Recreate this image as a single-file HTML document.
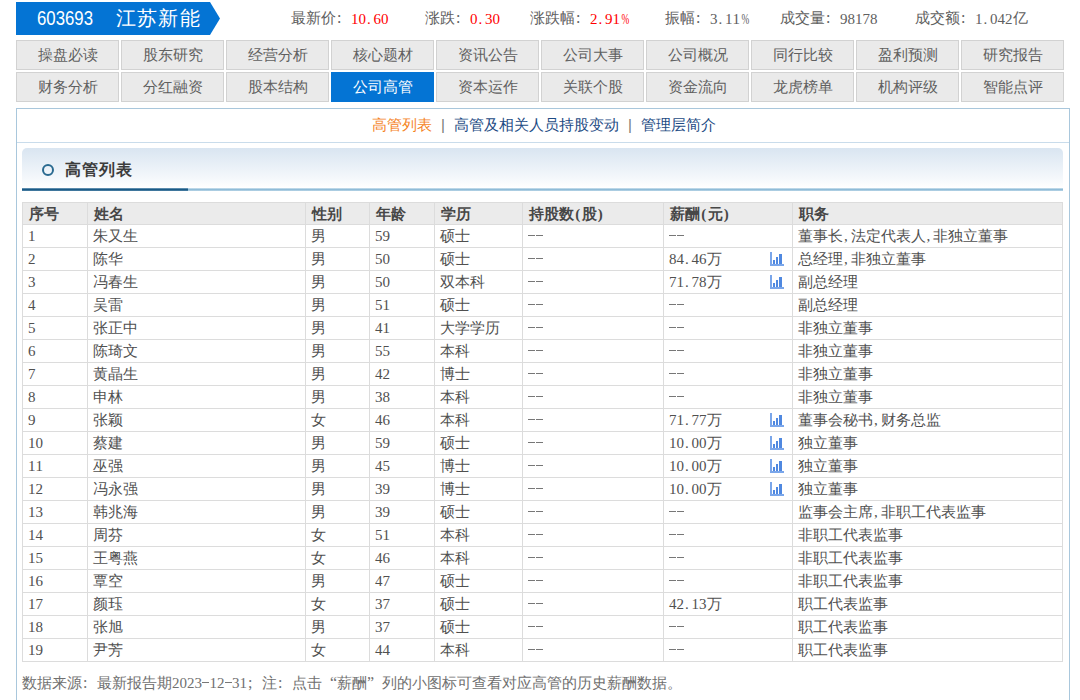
<!DOCTYPE html>
<html><head><meta charset="utf-8"><style>
*{margin:0;padding:0;box-sizing:border-box}
html,body{width:1080px;height:700px;overflow:hidden;background:#fff}
body{position:relative;font-family:"Liberation Sans",sans-serif;font-size:15px;color:#333}
.abs{position:absolute;white-space:nowrap}
i{font-style:normal}
.h{display:inline-block;width:7.5px;text-align:center;font-family:"Liberation Serif",serif;font-size:15px}
.fq{display:inline-block;width:15px;text-align:left;font-family:"Liberation Serif",serif;font-size:16px}
.fq.r{text-align:right}
.h.pc{transform:scaleX(.62)}
.h.p{text-align:left;text-indent:1px}
.q .h{position:relative;top:1px}
.d{display:inline-block;width:7.5px;height:1px;vertical-align:middle;position:relative;top:-2px;background:linear-gradient(90deg,#777 7px,transparent 7px)}
.fc{display:inline-block;width:15px;text-align:left;padding-left:1px;font-family:"Liberation Serif",serif;font-size:16px}
.tab{position:absolute;width:103px;height:30px;border:1px solid #d2d2d2;background:#eaeaea;color:#606060;text-align:center;line-height:28px;font-size:15px}
.tab.on{background:#0474d4;border-color:#0474d4;color:#fff}
.box{position:absolute;left:16px;top:108px;width:1054px;height:620px;border:1px solid #a9c7dc}
.hl{position:absolute;left:17px;top:142px;width:1052px;height:1px;background:#c9dceb}
.bar{position:absolute;left:22px;top:148px;width:1041px;height:40px;border-radius:5px 5px 0 0;background:linear-gradient(#d9e5f1,#f6f9fc 80%,#fff)}
.line1{position:absolute;left:22px;top:188px;width:1041px;height:3px;background:linear-gradient(rgba(143,188,216,.6) 1px,#8fbcd8 1px,#8fbcd8 2px,rgba(143,188,216,.75) 2px)}
.line2{position:absolute;left:22px;top:188px;width:166px;height:3px;background:linear-gradient(rgba(27,90,134,.6) 1px,#1b5a86 1px,#1b5a86 2px,rgba(27,90,134,.75) 2px)}
.hr{position:absolute;left:22px;width:1041px;height:1px;background:#dcdcdc}
.vr{position:absolute;top:202px;width:1px;height:460px;background:#dcdcdc}
.th{position:absolute;top:202px;left:22px;width:1041px;height:22px;background:#ebebeb}
.c{position:absolute;height:22px;line-height:22px;white-space:nowrap;color:#505050}
.c.b{color:#474747}
.b{font-weight:bold}
.ic{position:absolute}
</style></head><body>

<svg class="abs" style="left:0;top:0" width="230" height="40"><polygon points="16,2 210,2 220,18.5 210,35 16,35" fill="#0474d4"/></svg>
<div class="abs" style="left:37px;top:5px;height:26px;line-height:26px;font-size:19.5px;color:#fff;transform:scaleX(0.86);transform-origin:0 50%">603693</div>
<div class="abs" style="left:116px;top:4px;height:28px;line-height:28px;font-size:20px;letter-spacing:1.2px;color:#fff">江苏新能</div>
<div class="abs q" style="left:291px;top:8px;height:20px;line-height:20px;color:#606060">最新价<i class="fc">:</i><span style="color:#f00"><i class="h">1</i><i class="h">0</i><i class="h p">.</i><i class="h">6</i><i class="h">0</i></span></div>
<div class="abs q" style="left:425px;top:8px;height:20px;line-height:20px;color:#606060">涨跌<i class="fc">:</i><span style="color:#f00"><i class="h">0</i><i class="h p">.</i><i class="h">3</i><i class="h">0</i></span></div>
<div class="abs q" style="left:530px;top:8px;height:20px;line-height:20px;color:#606060">涨跌幅<i class="fc">:</i><span style="color:#f00"><i class="h">2</i><i class="h p">.</i><i class="h">9</i><i class="h">1</i><i class="h pc">%</i></span></div>
<div class="abs q" style="left:665px;top:8px;height:20px;line-height:20px;color:#606060">振幅<i class="fc">:</i><span style="color:#606060"><i class="h">3</i><i class="h p">.</i><i class="h">1</i><i class="h">1</i><i class="h pc">%</i></span></div>
<div class="abs q" style="left:780px;top:8px;height:20px;line-height:20px;color:#606060">成交量<i class="fc">:</i><span style="color:#606060"><i class="h">9</i><i class="h">8</i><i class="h">1</i><i class="h">7</i><i class="h">8</i></span></div>
<div class="abs q" style="left:915px;top:8px;height:20px;line-height:20px;color:#606060">成交额<i class="fc">:</i><span style="color:#606060"><i class="h">1</i><i class="h p">.</i><i class="h">0</i><i class="h">4</i><i class="h">2</i>亿</span></div>
<div class="tab" style="left:16px;top:40px">操盘必读</div>
<div class="tab" style="left:121px;top:40px">股东研究</div>
<div class="tab" style="left:226px;top:40px">经营分析</div>
<div class="tab" style="left:331px;top:40px">核心题材</div>
<div class="tab" style="left:436px;top:40px">资讯公告</div>
<div class="tab" style="left:541px;top:40px">公司大事</div>
<div class="tab" style="left:646px;top:40px">公司概况</div>
<div class="tab" style="left:751px;top:40px">同行比较</div>
<div class="tab" style="left:856px;top:40px">盈利预测</div>
<div class="tab" style="left:961px;top:40px">研究报告</div>
<div class="tab" style="left:16px;top:72px">财务分析</div>
<div class="tab" style="left:121px;top:72px">分红融资</div>
<div class="tab" style="left:226px;top:72px">股本结构</div>
<div class="tab on" style="left:331px;top:72px">公司高管</div>
<div class="tab" style="left:436px;top:72px">资本运作</div>
<div class="tab" style="left:541px;top:72px">关联个股</div>
<div class="tab" style="left:646px;top:72px">资金流向</div>
<div class="tab" style="left:751px;top:72px">龙虎榜单</div>
<div class="tab" style="left:856px;top:72px">机构评级</div>
<div class="tab" style="left:961px;top:72px">智能点评</div>
<div class="box"></div><div class="hl"></div>
<div class="abs" style="left:372px;top:115px;height:20px;line-height:20px;font-size:15px"><span style="color:#f5841f">高管列表</span><span style="color:#777;padding:0 9px">|</span><span style="color:#1d4b84">高管及相关人员持股变动</span><span style="color:#777;padding:0 9px">|</span><span style="color:#1d4b84">管理层简介</span></div>
<div class="bar"></div><div class="line1"></div><div class="line2"></div>
<div class="abs" style="left:42px;top:164px;width:12px;height:12px;border:2.5px solid #2a6a90;border-radius:50%"></div>
<div class="abs b" style="left:65px;top:159px;height:22px;line-height:22px;font-size:16px;letter-spacing:1px;color:#3c3c3c">高管列表</div>
<div class="th"></div>
<div class="hr" style="top:202px"></div>
<div class="hr" style="top:224px"></div>
<div class="hr" style="top:247px"></div>
<div class="hr" style="top:270px"></div>
<div class="hr" style="top:293px"></div>
<div class="hr" style="top:316px"></div>
<div class="hr" style="top:339px"></div>
<div class="hr" style="top:362px"></div>
<div class="hr" style="top:385px"></div>
<div class="hr" style="top:408px"></div>
<div class="hr" style="top:431px"></div>
<div class="hr" style="top:454px"></div>
<div class="hr" style="top:477px"></div>
<div class="hr" style="top:500px"></div>
<div class="hr" style="top:523px"></div>
<div class="hr" style="top:546px"></div>
<div class="hr" style="top:569px"></div>
<div class="hr" style="top:592px"></div>
<div class="hr" style="top:615px"></div>
<div class="hr" style="top:638px"></div>
<div class="hr" style="top:661px"></div>
<div class="vr" style="left:22px"></div>
<div class="vr" style="left:87px"></div>
<div class="vr" style="left:305px"></div>
<div class="vr" style="left:369px"></div>
<div class="vr" style="left:434px"></div>
<div class="vr" style="left:522px"></div>
<div class="vr" style="left:663px"></div>
<div class="vr" style="left:792px"></div>
<div class="vr" style="left:1062px"></div>
<div class="c b" style="left:29px;top:203px;">序号</div>
<div class="c b" style="left:94px;top:203px;">姓名</div>
<div class="c b" style="left:312px;top:203px;">性别</div>
<div class="c b" style="left:376px;top:203px;">年龄</div>
<div class="c b" style="left:441px;top:203px;">学历</div>
<div class="c b" style="left:529px;top:203px;">持股数<i class="h">(</i>股<i class="h">)</i></div>
<div class="c b" style="left:670px;top:203px;">薪酬<i class="h">(</i>元<i class="h">)</i></div>
<div class="c b" style="left:799px;top:203px;">职务</div>
<div class="c" style="left:28px;top:225px"><i class="h">1</i></div>
<div class="c" style="left:93px;top:225px">朱又生</div>
<div class="c" style="left:311px;top:225px">男</div>
<div class="c" style="left:375px;top:225px"><i class="h">5</i><i class="h">9</i></div>
<div class="c" style="left:440px;top:225px">硕士</div>
<div class="c" style="left:528px;top:225px"><i class="d"></i><i class="d"></i></div>
<div class="c" style="left:669px;top:225px"><i class="d"></i><i class="d"></i></div>
<div class="c" style="left:798px;top:225px">董事长<i class="h p">,</i>法定代表人<i class="h p">,</i>非独立董事</div>
<div class="c" style="left:28px;top:248px"><i class="h">2</i></div>
<div class="c" style="left:93px;top:248px">陈华</div>
<div class="c" style="left:311px;top:248px">男</div>
<div class="c" style="left:375px;top:248px"><i class="h">5</i><i class="h">0</i></div>
<div class="c" style="left:440px;top:248px">硕士</div>
<div class="c" style="left:528px;top:248px"><i class="d"></i><i class="d"></i></div>
<div class="c" style="left:669px;top:248px"><i class="h">8</i><i class="h">4</i><i class="h p">.</i><i class="h">4</i><i class="h">6</i>万</div>
<div class="c" style="left:798px;top:248px">总经理<i class="h p">,</i>非独立董事</div>
<svg class="ic" style="left:770px;top:252px" width="15" height="14" viewBox="0 0 15 14"><path fill="#7aa6ea" d="M0 0h2v12h12v2H0z"/><path fill="#4f88e0" d="M3 8h2v4H3z M6 5h2v7H6z M9 2h3v10H9z"/></svg>
<div class="c" style="left:28px;top:271px"><i class="h">3</i></div>
<div class="c" style="left:93px;top:271px">冯春生</div>
<div class="c" style="left:311px;top:271px">男</div>
<div class="c" style="left:375px;top:271px"><i class="h">5</i><i class="h">0</i></div>
<div class="c" style="left:440px;top:271px">双本科</div>
<div class="c" style="left:528px;top:271px"><i class="d"></i><i class="d"></i></div>
<div class="c" style="left:669px;top:271px"><i class="h">7</i><i class="h">1</i><i class="h p">.</i><i class="h">7</i><i class="h">8</i>万</div>
<div class="c" style="left:798px;top:271px">副总经理</div>
<svg class="ic" style="left:770px;top:275px" width="15" height="14" viewBox="0 0 15 14"><path fill="#7aa6ea" d="M0 0h2v12h12v2H0z"/><path fill="#4f88e0" d="M3 8h2v4H3z M6 5h2v7H6z M9 2h3v10H9z"/></svg>
<div class="c" style="left:28px;top:294px"><i class="h">4</i></div>
<div class="c" style="left:93px;top:294px">吴雷</div>
<div class="c" style="left:311px;top:294px">男</div>
<div class="c" style="left:375px;top:294px"><i class="h">5</i><i class="h">1</i></div>
<div class="c" style="left:440px;top:294px">硕士</div>
<div class="c" style="left:528px;top:294px"><i class="d"></i><i class="d"></i></div>
<div class="c" style="left:669px;top:294px"><i class="d"></i><i class="d"></i></div>
<div class="c" style="left:798px;top:294px">副总经理</div>
<div class="c" style="left:28px;top:317px"><i class="h">5</i></div>
<div class="c" style="left:93px;top:317px">张正中</div>
<div class="c" style="left:311px;top:317px">男</div>
<div class="c" style="left:375px;top:317px"><i class="h">4</i><i class="h">1</i></div>
<div class="c" style="left:440px;top:317px">大学学历</div>
<div class="c" style="left:528px;top:317px"><i class="d"></i><i class="d"></i></div>
<div class="c" style="left:669px;top:317px"><i class="d"></i><i class="d"></i></div>
<div class="c" style="left:798px;top:317px">非独立董事</div>
<div class="c" style="left:28px;top:340px"><i class="h">6</i></div>
<div class="c" style="left:93px;top:340px">陈琦文</div>
<div class="c" style="left:311px;top:340px">男</div>
<div class="c" style="left:375px;top:340px"><i class="h">5</i><i class="h">5</i></div>
<div class="c" style="left:440px;top:340px">本科</div>
<div class="c" style="left:528px;top:340px"><i class="d"></i><i class="d"></i></div>
<div class="c" style="left:669px;top:340px"><i class="d"></i><i class="d"></i></div>
<div class="c" style="left:798px;top:340px">非独立董事</div>
<div class="c" style="left:28px;top:363px"><i class="h">7</i></div>
<div class="c" style="left:93px;top:363px">黄晶生</div>
<div class="c" style="left:311px;top:363px">男</div>
<div class="c" style="left:375px;top:363px"><i class="h">4</i><i class="h">2</i></div>
<div class="c" style="left:440px;top:363px">博士</div>
<div class="c" style="left:528px;top:363px"><i class="d"></i><i class="d"></i></div>
<div class="c" style="left:669px;top:363px"><i class="d"></i><i class="d"></i></div>
<div class="c" style="left:798px;top:363px">非独立董事</div>
<div class="c" style="left:28px;top:386px"><i class="h">8</i></div>
<div class="c" style="left:93px;top:386px">申林</div>
<div class="c" style="left:311px;top:386px">男</div>
<div class="c" style="left:375px;top:386px"><i class="h">3</i><i class="h">8</i></div>
<div class="c" style="left:440px;top:386px">本科</div>
<div class="c" style="left:528px;top:386px"><i class="d"></i><i class="d"></i></div>
<div class="c" style="left:669px;top:386px"><i class="d"></i><i class="d"></i></div>
<div class="c" style="left:798px;top:386px">非独立董事</div>
<div class="c" style="left:28px;top:409px"><i class="h">9</i></div>
<div class="c" style="left:93px;top:409px">张颖</div>
<div class="c" style="left:311px;top:409px">女</div>
<div class="c" style="left:375px;top:409px"><i class="h">4</i><i class="h">6</i></div>
<div class="c" style="left:440px;top:409px">本科</div>
<div class="c" style="left:528px;top:409px"><i class="d"></i><i class="d"></i></div>
<div class="c" style="left:669px;top:409px"><i class="h">7</i><i class="h">1</i><i class="h p">.</i><i class="h">7</i><i class="h">7</i>万</div>
<div class="c" style="left:798px;top:409px">董事会秘书<i class="h p">,</i>财务总监</div>
<svg class="ic" style="left:770px;top:413px" width="15" height="14" viewBox="0 0 15 14"><path fill="#7aa6ea" d="M0 0h2v12h12v2H0z"/><path fill="#4f88e0" d="M3 8h2v4H3z M6 5h2v7H6z M9 2h3v10H9z"/></svg>
<div class="c" style="left:28px;top:432px"><i class="h">1</i><i class="h">0</i></div>
<div class="c" style="left:93px;top:432px">蔡建</div>
<div class="c" style="left:311px;top:432px">男</div>
<div class="c" style="left:375px;top:432px"><i class="h">5</i><i class="h">9</i></div>
<div class="c" style="left:440px;top:432px">硕士</div>
<div class="c" style="left:528px;top:432px"><i class="d"></i><i class="d"></i></div>
<div class="c" style="left:669px;top:432px"><i class="h">1</i><i class="h">0</i><i class="h p">.</i><i class="h">0</i><i class="h">0</i>万</div>
<div class="c" style="left:798px;top:432px">独立董事</div>
<svg class="ic" style="left:770px;top:436px" width="15" height="14" viewBox="0 0 15 14"><path fill="#7aa6ea" d="M0 0h2v12h12v2H0z"/><path fill="#4f88e0" d="M3 8h2v4H3z M6 5h2v7H6z M9 2h3v10H9z"/></svg>
<div class="c" style="left:28px;top:455px"><i class="h">1</i><i class="h">1</i></div>
<div class="c" style="left:93px;top:455px">巫强</div>
<div class="c" style="left:311px;top:455px">男</div>
<div class="c" style="left:375px;top:455px"><i class="h">4</i><i class="h">5</i></div>
<div class="c" style="left:440px;top:455px">博士</div>
<div class="c" style="left:528px;top:455px"><i class="d"></i><i class="d"></i></div>
<div class="c" style="left:669px;top:455px"><i class="h">1</i><i class="h">0</i><i class="h p">.</i><i class="h">0</i><i class="h">0</i>万</div>
<div class="c" style="left:798px;top:455px">独立董事</div>
<svg class="ic" style="left:770px;top:459px" width="15" height="14" viewBox="0 0 15 14"><path fill="#7aa6ea" d="M0 0h2v12h12v2H0z"/><path fill="#4f88e0" d="M3 8h2v4H3z M6 5h2v7H6z M9 2h3v10H9z"/></svg>
<div class="c" style="left:28px;top:478px"><i class="h">1</i><i class="h">2</i></div>
<div class="c" style="left:93px;top:478px">冯永强</div>
<div class="c" style="left:311px;top:478px">男</div>
<div class="c" style="left:375px;top:478px"><i class="h">3</i><i class="h">9</i></div>
<div class="c" style="left:440px;top:478px">博士</div>
<div class="c" style="left:528px;top:478px"><i class="d"></i><i class="d"></i></div>
<div class="c" style="left:669px;top:478px"><i class="h">1</i><i class="h">0</i><i class="h p">.</i><i class="h">0</i><i class="h">0</i>万</div>
<div class="c" style="left:798px;top:478px">独立董事</div>
<svg class="ic" style="left:770px;top:482px" width="15" height="14" viewBox="0 0 15 14"><path fill="#7aa6ea" d="M0 0h2v12h12v2H0z"/><path fill="#4f88e0" d="M3 8h2v4H3z M6 5h2v7H6z M9 2h3v10H9z"/></svg>
<div class="c" style="left:28px;top:501px"><i class="h">1</i><i class="h">3</i></div>
<div class="c" style="left:93px;top:501px">韩兆海</div>
<div class="c" style="left:311px;top:501px">男</div>
<div class="c" style="left:375px;top:501px"><i class="h">3</i><i class="h">9</i></div>
<div class="c" style="left:440px;top:501px">硕士</div>
<div class="c" style="left:528px;top:501px"><i class="d"></i><i class="d"></i></div>
<div class="c" style="left:669px;top:501px"><i class="d"></i><i class="d"></i></div>
<div class="c" style="left:798px;top:501px">监事会主席<i class="h p">,</i>非职工代表监事</div>
<div class="c" style="left:28px;top:524px"><i class="h">1</i><i class="h">4</i></div>
<div class="c" style="left:93px;top:524px">周芬</div>
<div class="c" style="left:311px;top:524px">女</div>
<div class="c" style="left:375px;top:524px"><i class="h">5</i><i class="h">1</i></div>
<div class="c" style="left:440px;top:524px">本科</div>
<div class="c" style="left:528px;top:524px"><i class="d"></i><i class="d"></i></div>
<div class="c" style="left:669px;top:524px"><i class="d"></i><i class="d"></i></div>
<div class="c" style="left:798px;top:524px">非职工代表监事</div>
<div class="c" style="left:28px;top:547px"><i class="h">1</i><i class="h">5</i></div>
<div class="c" style="left:93px;top:547px">王粤燕</div>
<div class="c" style="left:311px;top:547px">女</div>
<div class="c" style="left:375px;top:547px"><i class="h">4</i><i class="h">6</i></div>
<div class="c" style="left:440px;top:547px">本科</div>
<div class="c" style="left:528px;top:547px"><i class="d"></i><i class="d"></i></div>
<div class="c" style="left:669px;top:547px"><i class="d"></i><i class="d"></i></div>
<div class="c" style="left:798px;top:547px">非职工代表监事</div>
<div class="c" style="left:28px;top:570px"><i class="h">1</i><i class="h">6</i></div>
<div class="c" style="left:93px;top:570px">覃空</div>
<div class="c" style="left:311px;top:570px">男</div>
<div class="c" style="left:375px;top:570px"><i class="h">4</i><i class="h">7</i></div>
<div class="c" style="left:440px;top:570px">硕士</div>
<div class="c" style="left:528px;top:570px"><i class="d"></i><i class="d"></i></div>
<div class="c" style="left:669px;top:570px"><i class="d"></i><i class="d"></i></div>
<div class="c" style="left:798px;top:570px">非职工代表监事</div>
<div class="c" style="left:28px;top:593px"><i class="h">1</i><i class="h">7</i></div>
<div class="c" style="left:93px;top:593px">颜珏</div>
<div class="c" style="left:311px;top:593px">女</div>
<div class="c" style="left:375px;top:593px"><i class="h">3</i><i class="h">7</i></div>
<div class="c" style="left:440px;top:593px">硕士</div>
<div class="c" style="left:528px;top:593px"><i class="d"></i><i class="d"></i></div>
<div class="c" style="left:669px;top:593px"><i class="h">4</i><i class="h">2</i><i class="h p">.</i><i class="h">1</i><i class="h">3</i>万</div>
<div class="c" style="left:798px;top:593px">职工代表监事</div>
<div class="c" style="left:28px;top:616px"><i class="h">1</i><i class="h">8</i></div>
<div class="c" style="left:93px;top:616px">张旭</div>
<div class="c" style="left:311px;top:616px">男</div>
<div class="c" style="left:375px;top:616px"><i class="h">3</i><i class="h">7</i></div>
<div class="c" style="left:440px;top:616px">硕士</div>
<div class="c" style="left:528px;top:616px"><i class="d"></i><i class="d"></i></div>
<div class="c" style="left:669px;top:616px"><i class="d"></i><i class="d"></i></div>
<div class="c" style="left:798px;top:616px">职工代表监事</div>
<div class="c" style="left:28px;top:639px"><i class="h">1</i><i class="h">9</i></div>
<div class="c" style="left:93px;top:639px">尹芳</div>
<div class="c" style="left:311px;top:639px">女</div>
<div class="c" style="left:375px;top:639px"><i class="h">4</i><i class="h">4</i></div>
<div class="c" style="left:440px;top:639px">本科</div>
<div class="c" style="left:528px;top:639px"><i class="d"></i><i class="d"></i></div>
<div class="c" style="left:669px;top:639px"><i class="d"></i><i class="d"></i></div>
<div class="c" style="left:798px;top:639px">职工代表监事</div>
<div class="abs" style="left:22px;top:673px;height:20px;line-height:20px;color:#707070">数据来源<i class="fc">:</i>最新报告期<i class="h">2</i><i class="h">0</i><i class="h">2</i><i class="h">3</i><i class="d"></i><i class="h">1</i><i class="h">2</i><i class="d"></i><i class="h">3</i><i class="h">1</i><i class="fc">;</i>注<i class="fc">:</i>点击<i class="fq r">“</i>薪酬<i class="fq">”</i>列的小图标可查看对应高管的历史薪酬数据。</div>
</body></html>
